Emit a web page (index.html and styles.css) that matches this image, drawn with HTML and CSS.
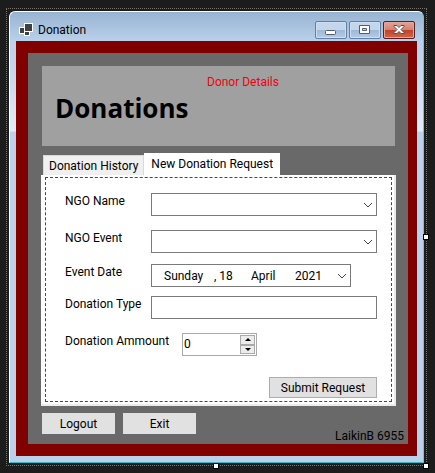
FILE: index.html
```html
<!DOCTYPE html>
<html lang="en">
<head>
<meta charset="utf-8">
<title>Donation</title>
<link rel="stylesheet" href="styles.css">
</head>
<body>
<div class="selection">
  <div class="window">
    <header class="titlebar">
      <svg class="app-icon" width="14" height="14" viewBox="0 0 14 14" shape-rendering="crispEdges" aria-hidden="true">
        <path d="M5 0h9v9h-3v4H5v-2H0V4h5z" fill="#fff"/>
        <path d="M6 1h7v7H6zM1 5h4v5H1zM6 9h4v3H6z" fill="#404040"/>
      </svg>
      <span class="window-title">Donation</span>
      <div class="caption-buttons">
        <button class="caption" type="button" aria-label="Minimize">
          <svg width="12" height="12" viewBox="0 0 12 12" aria-hidden="true"><rect x="0.500" y="6.500" width="10" height="4" rx="1" fill="#fff" stroke="#555d6b"/></svg>
        </button>
        <button class="caption" type="button" aria-label="Maximize">
          <svg width="12" height="12" viewBox="0 0 12 12" aria-hidden="true"><path d="M0.500 1.500h10v8h-10zM3.500 4.500v2h4v-2z" fill="#fff" fill-rule="evenodd" stroke="#555d6b"/></svg>
        </button>
        <button class="caption caption-close" type="button" aria-label="Close">
          <svg width="12" height="12" viewBox="0 0 12 12" aria-hidden="true"><path d="M1 1.500h3l2 2 2-2h3v1l-3 3 3 3v1H8l-2-2-2 2H1v-1l3-3-3-3z" fill="#fff" stroke="#5b4a55"/></svg>
        </button>
      </div>
    </header>
    <main class="client">
      <div class="surface">
        <section class="banner">
          <p class="details">Donor Details</p>
          <h1>Donations</h1>
        </section>
        <div class="tabs" role="tablist">
          <button class="tab" type="button" role="tab" aria-selected="false">Donation History</button>
          <button class="tab tab-active" type="button" role="tab" aria-selected="true">New Donation Request</button>
        </div>
        <div class="panel">
          <form class="form">
            <div class="row">
              <label for="ngo">NGO Name</label>
              <div class="field combo">
                <select id="ngo"><option></option></select>
                <svg class="chevron" width="10" height="6" viewBox="0 0 10 6" aria-hidden="true"><path d="M1 1l4 4 4-4"/></svg>
              </div>
            </div>
            <div class="row">
              <label for="event">NGO Event</label>
              <div class="field combo">
                <select id="event"><option></option></select>
                <svg class="chevron" width="10" height="6" viewBox="0 0 10 6" aria-hidden="true"><path d="M1 1l4 4 4-4"/></svg>
              </div>
            </div>
            <div class="row row-tight">
              <label for="date">Event Date</label>
              <button class="field date" id="date" type="button">
                <span class="weekday">Sunday</span><span class="day">, 18</span><span class="month">April</span><span>2021</span>
                <svg class="chevron" width="10" height="6" viewBox="0 0 10 6" aria-hidden="true"><path d="M1 1l4 4 4-4"/></svg>
              </button>
            </div>
            <div class="row">
              <label for="type">Donation Type</label>
              <input class="field" id="type" type="text">
            </div>
            <div class="row row-amount">
              <label for="amount">Donation Ammount</label>
              <div class="field spinner">
                <input id="amount" type="text" inputmode="numeric" value="0">
                <div class="steps">
                  <button type="button" aria-label="Increase"><svg width="6" height="3" viewBox="0 0 6 3" aria-hidden="true"><path d="M0 3l3-3 3 3z"/></svg></button>
                  <button type="button" aria-label="Decrease"><svg width="6" height="3" viewBox="0 0 6 3" aria-hidden="true"><path d="M0 0l3 3 3-3z"/></svg></button>
                </div>
              </div>
            </div>
            <button class="button submit" type="submit">Submit Request</button>
          </form>
        </div>
        <footer class="actions">
          <button class="button" type="button">Logout</button>
          <button class="button" type="button">Exit</button>
          <span class="user">LaikinB 6955</span>
        </footer>
      </div>
    </main>
  </div>
  <i class="handle handle-right"></i>
  <i class="handle handle-bottom"></i>
  <i class="handle handle-corner"></i>
</div>
</body>
</html>
```
FILE: styles.css
```css
* {
  box-sizing: border-box;
}

body {
  margin: 0;
  padding: 8px 8px 7px 6px;
  background: #1c1c1c;
  color: #000;
  font: 12px/16px Roboto, "Open Sans", sans-serif;
}

button,
input,
select {
  margin: 0;
  padding: 0;
  font: inherit;
  color: inherit;
}

.selection {
  position: relative;
  padding: 2px;
  border: 1px dotted #77736c;
}

.window {
  padding: 0 6px 6px;
  border: 1px solid #fff;
  border-right-color: #4fd0f0;
  border-bottom-color: #35b8c8;
  border-radius: 6px 6px 0 0;
  background: linear-gradient(#98b4d2, #b9d1ea 29px, #c3d8ee 60px, #e0edf9 119px, #b9d1ea 120px);
}

.titlebar {
  display: flex;
  align-items: center;
  height: 29px;
  padding: 6px 2px 0 3px;
}

.window-title {
  flex: 1;
  margin-left: 5px;
}

.caption-buttons {
  display: flex;
  gap: 2px;
}

.caption {
  display: flex;
  align-items: center;
  justify-content: center;
  width: 32px;
  height: 18px;
  border: 1px solid #5f7fa5;
  border-radius: 2px;
  background: linear-gradient(#c3d6eb 50%, #9db8d6 50%, #b4cbe4);
  box-shadow: inset 0 0 0 1px #cfdef0;
}

.caption-close {
  border-color: #5a1e1e;
  background: linear-gradient(#e3a598, #d5806f 50%, #be4027 50%, #d2664a);
  box-shadow: inset 0 0 0 1px #e5a89a;
}

.client {
  padding: 12px 9px 12px 12px;
  background: #800000;
}

.surface {
  padding: 13px 0 0;
  background: #696969;
}

.banner {
  height: 80px;
  margin: 0 13px 0 14px;
  padding: 8px 13px;
  background: #a0a0a0;
}

.details {
  margin: 0 0 0 152px;
  color: #f00010;
}

h1 {
  margin: 0;
  font: bold 26px/36px "Open Sans", "Noto Sans", sans-serif;
}

.tabs {
  display: flex;
  align-items: flex-end;
  margin: 7px 12px 0 15px;
}

.tab {
  height: 20px;
  padding: 0 5px;
  border: 1px solid #d9d9d9;
  border-bottom: 0;
  background: #f0f0f0;
  white-space: nowrap;
}

.tab-active {
  height: 22px;
  padding: 0 6px 2px;
  border-color: #fff;
  background: #fff;
}

.panel {
  margin: 0 12px 0 13px;
  padding: 2px 4px 4px;
  background: #fff;
  box-shadow: inset -2px -2px #ececec;
}

.form {
  display: flex;
  flex-direction: column;
  padding: 15px 14px 3px 19px;
  border: 1px dashed #484848;
}

.row {
  display: grid;
  grid-template-columns: 86px 1fr;
  margin-bottom: 14px;
}

.row-tight {
  margin-bottom: 9px;
}

.row:nth-child(2) {
  margin-bottom: 11px;
}

.row-amount {
  grid-template-columns: 117px 75px;
  margin-bottom: 21px;
}

.field {
  width: 100%;
  height: 23px;
  border: 1px solid #7a7a7a;
  background: #fff;
}

.combo {
  position: relative;
}

.combo select {
  display: block;
  width: 100%;
  height: 100%;
  border: 0;
  background: transparent;
  appearance: none;
}

.chevron {
  fill: none;
  stroke: #444;
}

.combo .chevron {
  position: absolute;
  top: 8px;
  right: 3px;
  pointer-events: none;
}

.date {
  display: flex;
  align-items: center;
  width: 200px;
  padding: 0 3px 0 12px;
}

.weekday {
  width: 50px;
  text-align: left;
}

.day {
  width: 37px;
  text-align: left;
}

.month {
  width: 44px;
  text-align: left;
}

.date .chevron {
  margin-left: auto;
}

.spinner {
  display: flex;
  padding: 1px;
  border-color: #aaa;
}

.spinner input {
  flex: 1;
  min-width: 0;
  height: 18px;
  border: 0;
}

.steps {
  display: flex;
  flex-direction: column;
  width: 15px;
}

.steps button {
  display: flex;
  flex: 1;
  align-items: center;
  justify-content: center;
  border: 1px solid #aaa;
  background: #ececec;
}

.button {
  width: 73px;
  height: 21px;
  border: 1px solid #e1e1e1;
  background: #e1e1e1;
}

.submit {
  align-self: flex-end;
  width: 108px;
  border-color: #adadad;
}

.actions {
  display: flex;
  gap: 8px;
  height: 38px;
  padding: 7px 4px 0 14px;
}

.user {
  align-self: flex-end;
  margin-left: auto;
}

.handle {
  position: absolute;
  width: 6px;
  height: 6px;
  border: 1px solid #000;
  background: #fff;
}

.handle-right {
  top: calc(50% - 3px);
  right: -3px;
}

.handle-bottom {
  bottom: -4px;
  left: calc(50% - 4px);
}

.handle-corner {
  right: -3px;
  bottom: -4px;
}
```
